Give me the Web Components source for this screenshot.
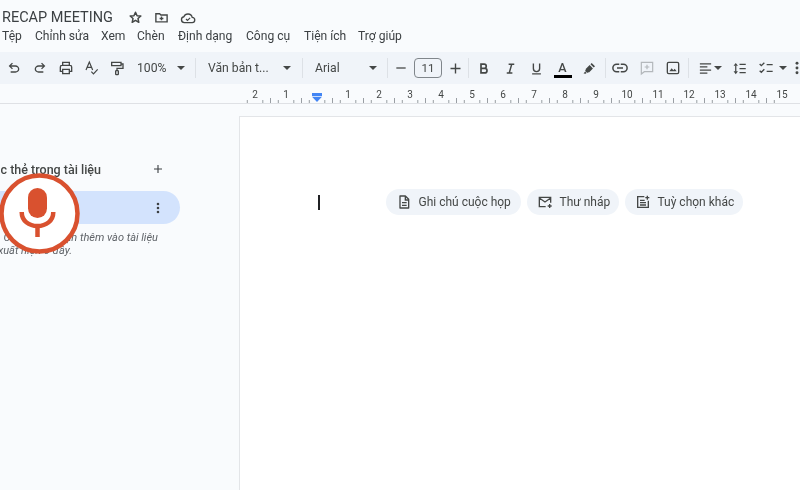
<!DOCTYPE html>
<html lang="vi"><head><meta charset="utf-8">
<style>
html,body{margin:0;padding:0;width:800px;height:490px;overflow:hidden;background:#f9fbfd}
body{font-family:Roboto,"Liberation Sans",sans-serif;color:#444746}
</style></head><body>
<docs-app></docs-app>
<script>
const I={
 star:'<path fill="none" stroke="currentColor" stroke-width="2.400" stroke-linejoin="round" d="M12 3.500l2.500 5.600 6 .6-4.500 4 1.300 6L12 16.600l-5.300 3.100 1.300-6-4.500-4 6-.6z"/>',
 folder:'<path fill="none" stroke="currentColor" stroke-width="2.200" d="M3 6h6l2 2h10v11H3z"/><path stroke="currentColor" stroke-width="2.200" d="M12 10.500v6M9 13.500h6"/>',
 cloud:'<path fill="none" stroke="currentColor" stroke-width="2" d="M6.500 19a4.500 4.500 0 0 1-.7-8.900A6.600 6.600 0 0 1 12 6a6.400 6.400 0 0 1 6.300 5 4 4 0 0 1-.3 8z"/><path fill="none" stroke="currentColor" stroke-width="1.800" d="M9 13.500l2.200 2.200 4-4"/>',
 undo:'<path fill="currentColor" d="M7 19v-2h7.100q1.575 0 2.737-1T18 13.500q0-1.500-1.162-2.500T14.100 10H7.800l2.600 2.600L9 14 4 9l5-5 1.400 1.400L7.800 8h6.300q2.425 0 4.163 1.575T20 13.500q0 2.350-1.737 3.925T14.100 19H7z"/>',
 redo:'<g transform="matrix(-1 0 0 1 24 0)"><path fill="currentColor" d="M7 19v-2h7.100q1.575 0 2.737-1T18 13.500q0-1.500-1.162-2.500T14.100 10H7.800l2.600 2.600L9 14 4 9l5-5 1.400 1.400L7.800 8h6.300q2.425 0 4.163 1.575T20 13.500q0 2.350-1.737 3.925T14.100 19H7z"/></g>',
 print:'<path fill="none" stroke="currentColor" stroke-width="2" d="M7 8V3.500h10V8M7 17H3.500v-6.500A2.500 2.500 0 0 1 6 8h12a2.500 2.500 0 0 1 2.500 2.500V17H17M7 14h10v6.500H7z"/>',
 spell:'<path fill="none" stroke="currentColor" stroke-width="1.800" d="M3 15L8 3l5 12M4.800 11h6.400M11 17.500l3.200 3.200 6.300-6.700"/>',
 paint:'<path fill="none" stroke="currentColor" stroke-width="2" d="M4 3.500h14v5H4zM18 6h3v6.500h-9V16"/><rect x="10" y="16" width="4" height="6" rx="1" fill="none" stroke="currentColor" stroke-width="2"/>',
 minus:'<path stroke="currentColor" stroke-width="2.200" d="M4 12h16"/>',
 plus:'<path stroke="currentColor" stroke-width="2.200" d="M12 4v16M4 12h16"/>',
 bold:'<path fill="none" stroke="currentColor" stroke-width="2.700" d="M8 5h5a3.400 3.400 0 0 1 0 6.800H8zM8 11.800h6a3.600 3.600 0 0 1 0 7.200H8zM8 3.700v16.600"/>',
 italic:'<path fill="none" stroke="currentColor" stroke-width="2.400" d="M9 5h9M6 19h9M14 5l-4 14"/>',
 under:'<path fill="none" stroke="currentColor" stroke-width="2.200" d="M7 4v8a5 5 0 0 0 10 0V4M5 20.500h14"/>',
 pen:'<path fill="currentColor" d="M15.500 3.200l5.300 5.300-2 2-5.300-5.300zM12.200 6.500l5.300 5.300-6.300 6.400-1.500-.1-1.200 1.200-3.700-3.700 1.200-1.200-.1-1.500zM5 16.800l2.200 2.200-1.200 1.200-3.500-.4z"/>',
 link:'<path fill="none" stroke="currentColor" stroke-width="2" d="M11 7H7.500a5 5 0 0 0 0 10H11M13 7h3.500a5 5 0 0 1 0 10H13M8 12h8"/>',
 comment:'<path fill="none" stroke="#b4b8bc" stroke-width="1.800" d="M3.500 3.500h17v14H8l-4.500 3.500zM12 7v7M8.500 10.500h7"/>',
 image:'<rect x="3.500" y="3.500" width="17" height="17" rx="2" fill="none" stroke="currentColor" stroke-width="2"/><path fill="currentColor" d="M6.500 17l3.500-4.500 2.500 3 2-2.500 3 4z"/>',
 align:'<path stroke="currentColor" stroke-width="2" d="M3 4.500h18M3 9.500h12M3 14.500h18M3 19.500h12"/>',
 lines:'<path fill="currentColor" d="M6 3l3.500 4.500h-7zM6 21l3.500-4.500h-7z"/><path stroke="currentColor" stroke-width="2" d="M6 7v10M12 5.500h10M12 12h10M12 18.500h10"/>',
 check:'<path fill="none" stroke="currentColor" stroke-width="2" d="M2.500 6l2.500 2.500L9.500 4M2.500 16l2.500 2.500L9.500 14M13 7h9M13 17h9"/>',
 more:'<circle cx="12" cy="5" r="2.200" fill="currentColor"/><circle cx="12" cy="12" r="2.200" fill="currentColor"/><circle cx="12" cy="19" r="2.200" fill="currentColor"/>',
 doc:'<path fill="none" stroke="currentColor" stroke-width="2" stroke-linejoin="round" d="M6 3h8l5 5v13H6z"/><path stroke="currentColor" stroke-width="2" d="M9 13h7M9 17h7"/><path fill="currentColor" d="M13 3h2v5h4v2h-6z"/>',
 mail:'<path fill="none" stroke="currentColor" stroke-width="2" d="M13 19H3.500V5h17v8M3.500 6l8.500 6 8.500-6"/><path stroke="currentColor" stroke-width="2" d="M19 15v6M16 18h6"/>',
 opts:'<path fill="none" stroke="currentColor" stroke-width="2" d="M14 4H4v16h16V10"/><path stroke="currentColor" stroke-width="2" d="M7.500 9.500h7M7.500 13h9M7.500 16.500h9M18.500 2.500v6M15.500 5.500h6"/>'
};
const svg=(n,s)=>`<svg viewBox="0 0 24 24" width="${s}" height="${s}" aria-hidden="true" style="display:block">${I[n]}</svg>`;

class TbIcon extends HTMLElement{connectedCallback(){
 const w=this.getAttribute('w')||26,s=this.getAttribute('s')||16;
 this.attachShadow({mode:'open'}).innerHTML=`<style>:host{display:flex;align-items:center;justify-content:center;flex:none;width:${w}px;height:32px;color:#444746}</style>${svg(this.getAttribute('i'),s)}`;
}}
class TbCaret extends HTMLElement{connectedCallback(){
 const w=this.getAttribute('w')||12;
 this.attachShadow({mode:'open'}).innerHTML=`<style>:host{display:flex;align-items:center;justify-content:center;flex:none;width:${w}px;height:32px}i{display:block;border:4px solid transparent;border-top:4.500px solid #444746;border-bottom:0}</style><i></i>`;
}}
class TbSep extends HTMLElement{connectedCallback(){
 this.attachShadow({mode:'open'}).innerHTML=`<style>:host{display:block;flex:none;width:1px;height:20px;background:#dde1e6}</style>`;
}}
class TbText extends HTMLElement{connectedCallback(){
 const w=this.getAttribute('w');
 this.attachShadow({mode:'open'}).innerHTML=`<style>:host{display:flex;align-items:center;flex:none;width:${w}px;height:32px;font-size:12.200px;color:#444746;white-space:nowrap}</style><slot></slot>`;
}}
class TbColor extends HTMLElement{connectedCallback(){
 this.attachShadow({mode:'open'}).innerHTML=`<style>:host{display:flex;flex-direction:column;align-items:center;justify-content:center;flex:none;width:27px;height:32px;font-size:12.500px;font-weight:500;color:#444746;line-height:13px}b{display:block;width:18px;height:3px;background:#000;margin-top:1px;margin-bottom:-2px}</style><span>A</span><b></b>`;
}}
class FontSize extends HTMLElement{connectedCallback(){
 this.attachShadow({mode:'open'}).innerHTML=`<style>:host{display:flex;align-items:center;justify-content:center;flex:none;width:26px;height:18px;border:1px solid #80868b;border-radius:4px;font-size:11.500px;color:#444746}</style><slot></slot>`;
}}
class DocsTitle extends HTMLElement{connectedCallback(){
 this.attachShadow({mode:'open'}).innerHTML=`<style>:host{display:block;height:52px;background:#f9fbfd;box-sizing:border-box;padding:8px 0 0 2px}
 .t{display:flex;align-items:center;height:19px;font-size:14.500px;color:#3c4043;white-space:nowrap}
 .t span{width:125.500px;flex:none}.t svg{flex:none;margin-right:11px;color:#444746}
 nav{display:flex;height:16px;margin-top:1px;font-size:12.100px;line-height:16px;color:#3c4043;white-space:nowrap}
 nav span{flex:none}</style>
 <div class="t"><span>RECAP MEETING</span>${svg('star',15)}${svg('folder',15)}${svg('cloud',16)}</div>
 <nav><span style="width:33px">Tệp</span><span style="width:66px">Chỉnh sửa</span><span style="width:36px">Xem</span><span style="width:41px">Chèn</span><span style="width:68px">Định dạng</span><span style="width:58px">Công cụ</span><span style="width:54px">Tiện ích</span><span>Trợ giúp</span></nav>`;
}}
class DocsToolbar extends HTMLElement{connectedCallback(){
 this.attachShadow({mode:'open'}).innerHTML=`<style>:host{display:flex;align-items:center;height:32px;background:#f0f4f9;padding-left:1px;overflow:hidden}</style><slot></slot>`;
}}
class DocsRuler extends HTMLElement{connectedCallback(){
 let t='';
 for(let i=-10;i<=60;i++){const x=317+i*7.75;if(x<240||x>800)continue;
  const h=i%4===0?0:(i%2===0?5:3);
  if(i%4!==0)t+=`<path d="M${x.toFixed(1)} ${19-h}V19" stroke="#80868b" stroke-width=".8"/>`;
  else if(i!==0)t+=`<text x="${x.toFixed(1)}" y="14" text-anchor="middle" font-size="10" fill="#444746">${Math.abs(i/4)}</text>`;
 }
 this.attachShadow({mode:'open'}).innerHTML=`<style>:host{display:block;height:20px;background:#f9fbfd;border-bottom:1px solid #dfe1e5;box-sizing:border-box}svg{display:block;font-family:Roboto,sans-serif}</style>
 <svg width="800" height="19" viewBox="0 0 800 19">${t}<path fill="#4285f4" d="M312 9h10v3h-10zM312 12.800h10L317 18z"/></svg>`;
}}
class DocsOutline extends HTMLElement{connectedCallback(){
 this.attachShadow({mode:'open'}).innerHTML=`<style>:host{display:block;flex:none;width:239px;box-sizing:border-box;padding-top:56px;font-size:12.500px;overflow:hidden}
 .h{display:flex;align-items:center;height:18px}
 .h .l{display:flex;justify-content:flex-end;flex:none;width:101px;white-space:nowrap;color:#444746;font-weight:500}
 .h .p{margin-left:51px;color:#3c4043}
 .pill{display:flex;align-items:center;justify-content:flex-end;width:180px;height:33px;margin-top:13px;background:#d3e3fd;border-radius:0 17px 17px 0;box-sizing:border-box;padding-right:15px;color:#3c4043}
 .n{display:flex;justify-content:flex-end;white-space:nowrap;font-style:italic;font-size:11px;line-height:13px;color:#5f6368}
 .n1{width:158px;margin-top:7px}.n2{width:72px}</style>
 <div class="h"><span class="l"><span>Các thẻ trong tài liệu</span></span><span class="p">${svg('plus',12)}</span></div>
 <div class="pill">${svg('more',14)}</div>
 <div class="n n1"><span>Các tiêu đề bạn thêm vào tài liệu</span></div>
 <div class="n n2"><span>sẽ xuất hiện ở đây.</span></div>`;
}}
class DocChip extends HTMLElement{connectedCallback(){
 const w=this.getAttribute('w');
 this.attachShadow({mode:'open'}).innerHTML=`<style>:host{display:flex;align-items:center;flex:none;width:${w}px;height:26px;box-sizing:border-box;padding-left:10px;gap:7px;background:#f0f4f9;border-radius:13px;font-size:12px;color:#444746;white-space:nowrap}svg{flex:none}</style>${svg(this.getAttribute('i'),16)}<slot></slot>`;
}}
class DocPage extends HTMLElement{connectedCallback(){
 this.attachShadow({mode:'open'}).innerHTML=`<style>:host{display:block;flex:1;margin-top:12px;background:#fff;border:1px solid #e3e5e8;border-right:0;border-bottom:0;box-sizing:border-box;padding:72px 0 0 78px}
 .r{display:flex;align-items:center;height:26px}
 .c{flex:none;width:1.500px;height:15px;background:#202124;margin-right:66px}
 .g{display:flex;gap:6px}</style><div class="r"><div class="c"></div><div class="g"><slot></slot></div></div>`;
}}
class MicBadge extends HTMLElement{connectedCallback(){
 this.attachShadow({mode:'open'}).innerHTML=`<style>:host{display:block;position:absolute;left:-3px;top:172px;width:84px;height:84px}svg{display:block}</style>
 <svg width="84" height="84" viewBox="0 0 84 84" aria-hidden="true"><circle cx="42.500" cy="41.500" r="38" fill="#fff" stroke="#d9512f" stroke-width="4.500"/>
 <rect x="31" y="16" width="19" height="30" rx="9.500" fill="#d9512f"/>
 <path fill="none" stroke="#d9512f" stroke-width="4.500" d="M24.700 40C24.700 49 32 54 40.500 54C49 54 56.300 49 56.300 40"/><path stroke="#d9512f" stroke-width="4.500" d="M40.500 54V65"/></svg>`;
}}
class DocsApp extends HTMLElement{connectedCallback(){
 this.attachShadow({mode:'open'}).innerHTML=`<style>:host{display:block;position:relative;width:800px;height:490px;overflow:hidden;background:#f9fbfd;filter:blur(.35px)}
 .b{display:flex;height:386px}
 tb-sep{margin-left:8px;margin-right:7px}</style>
 <docs-title></docs-title>
 <docs-toolbar>
  <tb-icon i="undo"></tb-icon><tb-icon i="redo"></tb-icon><tb-icon i="print"></tb-icon><tb-icon i="spell" w="25"></tb-icon><tb-icon i="paint" w="26"></tb-icon>
  <tb-text w="38" style="margin-left:7px">100%</tb-text><tb-caret w="12"></tb-caret><tb-sep></tb-sep>
  <tb-text w="73" style="margin-left:5px">Văn bản t...</tb-text><tb-caret w="12"></tb-caret><tb-sep style="margin-left:9px"></tb-sep>
  <tb-text w="52" style="margin-left:5px">Arial</tb-text><tb-caret w="12"></tb-caret><tb-sep style="margin-left:8px;margin-right:0"></tb-sep>
  <tb-icon i="minus" w="26" s="14"></tb-icon><font-size>11</font-size><tb-icon i="plus" w="26" s="15"></tb-icon><tb-sep style="margin:0"></tb-sep>
  <tb-icon i="bold" w="28" s="15"></tb-icon><tb-icon i="italic" w="26" s="15"></tb-icon><tb-icon i="under" w="26" s="15"></tb-icon><tb-color></tb-color><tb-icon i="pen" w="27" s="15"></tb-icon><tb-sep style="margin:0 0 0 2px"></tb-sep>
  <tb-icon i="link" w="28" s="18"></tb-icon><tb-icon i="comment" w="26" s="16"></tb-icon><tb-icon i="image" w="26" s="16"></tb-icon><tb-sep style="margin:0 0 0 2px"></tb-sep>
  <tb-icon i="align" w="16" s="15" style="margin-left:8px"></tb-icon><tb-caret w="10"></tb-caret><tb-icon i="lines" w="32" s="15"></tb-icon><tb-icon i="check" w="22" s="16"></tb-icon><tb-caret w="12"></tb-caret><tb-icon i="more" w="16" s="16"></tb-icon>
 </docs-toolbar>
 <docs-ruler></docs-ruler>
 <div class="b"><docs-outline></docs-outline>
 <doc-page><doc-chip i="doc" w="135">Ghi chú cuộc họp</doc-chip><doc-chip i="mail" w="92">Thư nháp</doc-chip><doc-chip i="opts" w="118">Tuỳ chọn khác</doc-chip></doc-page></div>
 <mic-badge></mic-badge>`;
}}
Object.entries({'tb-icon':TbIcon,'tb-caret':TbCaret,'tb-sep':TbSep,'tb-text':TbText,'tb-color':TbColor,'font-size':FontSize,'docs-title':DocsTitle,'docs-toolbar':DocsToolbar,'docs-ruler':DocsRuler,'docs-outline':DocsOutline,'doc-chip':DocChip,'doc-page':DocPage,'mic-badge':MicBadge,'docs-app':DocsApp}).forEach(([k,v])=>customElements.define(k,v));
</script>
</body></html>
